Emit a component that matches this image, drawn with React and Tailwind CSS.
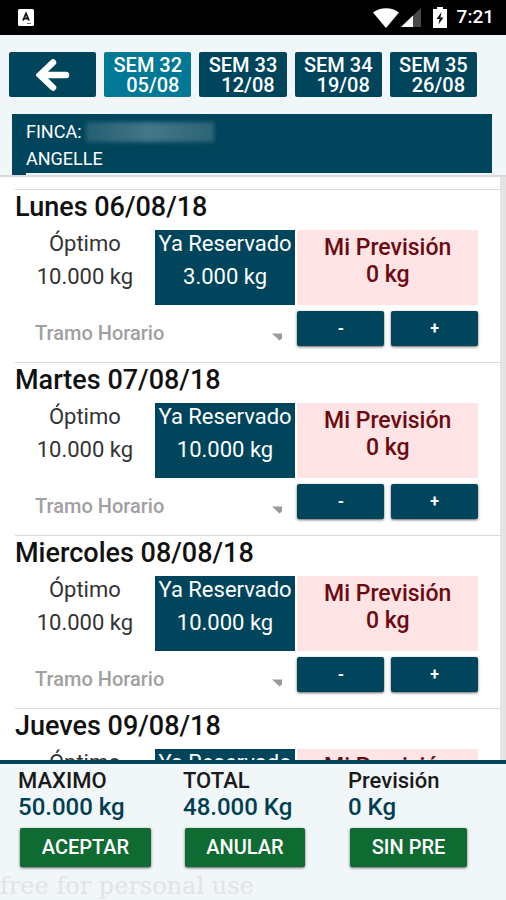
import React, { useState } from 'react';

const weeks = [
  { name: 'SEM 32', date: '05/08' },
  { name: 'SEM 33', date: '12/08' },
  { name: 'SEM 34', date: '19/08' },
  { name: 'SEM 35', date: '26/08' },
];

const days = [
  { id: 'lunes', title: 'Lunes 06/08/18', optimo: '10.000 kg', reservado: '3.000 kg' },
  { id: 'martes', title: 'Martes 07/08/18', optimo: '10.000 kg', reservado: '10.000 kg' },
  { id: 'miercoles', title: 'Miercoles 08/08/18', optimo: '10.000 kg', reservado: '10.000 kg' },
  { id: 'jueves', title: 'Jueves 09/08/18', optimo: '10.000 kg', reservado: '10.000 kg' },
];

const totals = [
  { label: 'MAXIMO', value: '50.000 kg', action: 'ACEPTAR', width: 'w-[131px]' },
  { label: 'TOTAL', value: '48.000 Kg', action: 'ANULAR', width: 'w-[120px]' },
  { label: 'Previsión', value: '0 Kg', action: 'SIN PRE', width: 'w-[117px]' },
];

const StatusBar = () => (
  <div className="flex h-[35px] shrink-0 items-center bg-black pl-[18px] pr-3 text-white">
    <svg className="h-[17px] w-4" viewBox="0 0 16 17">
      <rect width="16" height="17" rx="1.5" fill="#fff" />
      <path d="M5 11.5 8 4.5l3 7M6 9.5h4" fill="none" stroke="#111" strokeWidth="1.8" />
      <path d="M9 14.5h4" stroke="#777" strokeWidth="1" />
    </svg>
    <svg className="ml-auto h-5 w-[26px]" viewBox="0 0 26 20">
      <path d="M0 4.5C7-1.2 19-1.2 26 4.5L13 20Z" fill="#fff" />
    </svg>
    <svg className="ml-0.5 h-[19px] w-5" viewBox="0 0 20 19">
      <path d="M0 19 20 0v19Z" fill="#4a4a4a" />
      <path d="M0 19 12 7.6V19Z" fill="#fff" />
    </svg>
    <svg className="ml-3 h-[21px] w-3.5" viewBox="0 0 14 21">
      <path d="M4 0h6v2h4v19H0V2h4Z" fill="#fff" />
      <path d="M8.5 5 3.5 12H6.5L5.5 17.5 10.5 10.5H7.5Z" fill="#111" />
    </svg>
    <span className="ml-2.5 text-[19px] font-medium">7:21</span>
  </div>
);

const DayRow = ({ day }) => {
  const [kg, setKg] = useState(0);

  return (
    <section className="h-[173px] shrink-0 border-t border-[#d9d9d9] pr-[22px]">
      <h2 className="flex h-10 items-center pb-1.5 text-[27px] font-medium text-[#111]">{day.title}</h2>
      <div className="grid grid-cols-[140fr_141fr_183fr] text-center">
        <div className="text-[22px] text-[#333]">
          <p className="leading-[27px]">Óptimo</p>
          <p className="mt-1.5 leading-[28px]">{day.optimo}</p>
        </div>
        <div className="h-[75px] whitespace-nowrap bg-[#00455c] text-[22px] text-white">
          <p className="leading-[27px]">Ya Reservado</p>
          <p className="mt-1.5 leading-[28px]">{day.reservado}</p>
        </div>
        <div className="ml-0.5 h-[75px] bg-[#ffe4e6] pt-1 text-[23px] font-medium leading-[27px] text-[#6b0a10]">
          <p>Mi Previsión</p>
          <p>{kg} kg</p>
        </div>
      </div>
      <div className="mt-1.5 grid grid-cols-[281fr_183fr]">
        <div className="relative pt-1.5">
          <select
            aria-label="Tramo Horario"
            defaultValue=""
            className="h-8 w-full appearance-none bg-transparent pl-5 text-xl font-medium text-[#a0a0a0]"
          >
            <option value="">Tramo Horario</option>
          </select>
          <svg className="pointer-events-none absolute right-3 top-[22px] h-2 w-3" viewBox="0 0 12 8">
            <path d="M1 0.5h10v5L8.5 7.5Z" fill="#9a9a9a" />
          </svg>
        </div>
        <div className="grid grid-cols-2 gap-[7px] pl-0.5">
          <button
            onClick={() => setKg(Math.max(0, kg - 1000))}
            className="h-[35px] rounded-xs bg-[#00455c] text-base font-bold text-white shadow-sm shadow-black/50"
          >
            -
          </button>
          <button
            onClick={() => setKg(kg + 1000)}
            className="h-[35px] rounded-xs bg-[#00455c] text-base font-bold text-white shadow-sm shadow-black/50"
          >
            +
          </button>
        </div>
      </div>
    </section>
  );
};

const App = () => {
  const [selected, setSelected] = useState(0);

  return (
    <div className="flex h-screen flex-col overflow-hidden bg-[#f1f6f8] font-[Roboto,sans-serif]">
      <StatusBar />

      <header className="shrink-0 border-b-2 border-[#d6dadc] pt-[17px]">
        <nav className="grid grid-cols-5 gap-2 pl-[9px] pr-[29px]">
          <button aria-label="Volver" className="flex h-[45px] items-center justify-center rounded-xs bg-[#00455c]">
            <svg className="h-8 w-[34px]" viewBox="0 0 34 32" fill="none" stroke="#fff" strokeWidth="6.5" strokeLinecap="round">
              <path d="M30 16H5M17 3.500 4 16l13 12.500" strokeLinejoin="miter" />
            </svg>
          </button>
          {weeks.map((week, i) => (
            <button
              key={week.name}
              onClick={() => setSelected(i)}
              className={`h-[45px] whitespace-nowrap rounded-xs text-center text-xl font-medium leading-5 text-white ${
                selected === i ? 'bg-[#007896]' : 'bg-[#00455c]'
              }`}
            >
              {week.name}
              <span className="block pl-2.5">{week.date}</span>
            </button>
          ))}
        </nav>

        <div className="ml-3 mr-3.5 mt-[17px] bg-[#00455c] pl-3.5 text-lg leading-[27px] text-white">
          <div className="border-b-2 border-[#f1f6f8] pb-px pt-1">
            <div className="flex items-center gap-1">
              <span>FINCA:</span>
              <span className="h-5 w-32 bg-linear-to-r from-[#255f73] via-[#447789] to-[#2c6477] blur-[2px]" />
            </div>
            <p>ANGELLE</p>
          </div>
        </div>
      </header>

      {/* Days list */}
      <main className="min-h-0 flex-1 overflow-hidden border-r-[6px] border-[#e4e4e4] bg-white pl-[15px] pt-3">
        {days.map(day => (
          <DayRow key={day.id} day={day} />
        ))}
      </main>

      <footer className="relative shrink-0 border-t-4 border-[#00455c] pb-[33px] pl-[18px] pt-1">
        <div className="grid grid-cols-[165fr_165fr_158fr]">
          {totals.map(total => (
            <div key={total.label}>
              <p className="text-[22px] font-medium leading-[26px] text-[#1a1a1a]">{total.label}</p>
              <p className="text-2xl font-medium leading-[26px] text-[#003f52]">{total.value}</p>
              <button
                className={`ml-0.5 mt-2 h-[39px] rounded-xs bg-[#0f6b31] pb-0.5 text-xl font-medium text-white shadow-sm shadow-black/50 ${total.width}`}
              >
                {total.action}
              </button>
            </div>
          ))}
        </div>
        <p className="absolute bottom-0 left-0 font-['DejaVu_Serif',serif] text-2xl leading-7 text-[#e0e4e6]">
          free for personal use
        </p>
      </footer>
    </div>
  );
};

export default App;
